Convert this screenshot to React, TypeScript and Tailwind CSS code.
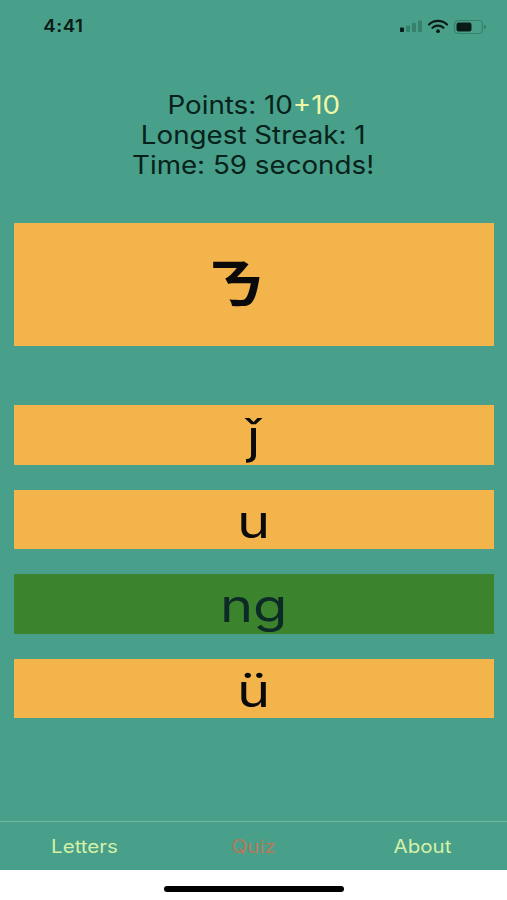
const sans = "font-['Inter','Liberation_Sans',sans-serif]";

function StatusIcons() {
  return (
    <svg width="88" height="16" viewBox="0 0 88 16" fill="none">
      {/* signal */}
      <rect x="0" y="8.5" width="4" height="4.5" rx="0.8" fill="#0a1a14" />
      <rect x="6" y="6.5" width="4" height="6.5" rx="0.8" fill="#37806d" />
      <rect x="12" y="4" width="4" height="9" rx="0.8" fill="#37806d" />
      <rect x="18" y="1.5" width="4" height="11.5" rx="0.8" fill="#37806d" />
      {/* wifi */}
      <path d="M29 5.5a13 13 0 0 1 18 0" stroke="#0a1a14" strokeWidth="2.2" strokeLinecap="round" />
      <path d="M32.5 8.8a8.2 8.2 0 0 1 11 0" stroke="#0a1a14" strokeWidth="2.2" strokeLinecap="round" />
      <circle cx="38" cy="12.2" r="1.9" fill="#0a1a14" />
      {/* battery */}
      <rect x="54.5" y="1.5" width="28" height="13" rx="4" stroke="#37806d" strokeWidth="1.2" />
      <rect x="56.5" y="3.5" width="15" height="9" rx="2.2" fill="#0a1a14" />
      <rect x="84" y="6" width="2" height="4" rx="1" fill="#37806d" />
    </svg>
  );
}

function Choice({ label, correct }: { label: string; correct?: boolean }) {
  return (
    <div
      className={`flex h-[59.5px] items-center justify-center pt-[3px] text-[46px] leading-none ${
        correct ? "bg-[#3c832e] text-[#0c2a26]" : "bg-[#f4b44c] text-[#0a0a0a]"
      }`}
    >
      <span className="inline-block scale-x-[1.22]">{label}</span>
    </div>
  );
}

export default function App() {
  return (
    <div className={`flex h-[900px] w-[507px] flex-col overflow-hidden bg-white ${sans}`}>
      <div className="flex flex-1 flex-col bg-[#48a08a]">
        <div className="flex h-[44px] shrink-0 items-center justify-between pl-[45px] pr-[19px] pt-[9px]">
          <span className="inline-block scale-x-[1.1] text-[17px] font-semibold tracking-[0.5px] text-[#0a1a14]">4:41</span>
          <StatusIcons />
        </div>

        <div className="mt-[46px] flex flex-col items-center text-[25px] leading-[30px] text-[#07211b]">
          <div className="scale-x-[1.11]">
            Points: 10<span className="text-[#f0f7a8]">+10</span>
          </div>
          <div className="scale-x-[1.11]">Longest Streak: 1</div>
          <div className="scale-x-[1.11]">Time: 59 seconds!</div>
        </div>

        <div className="ml-[14px] mr-[13px] mt-[43px] flex h-[123px] items-center justify-center bg-[#f4b44c] pb-[8px] pr-[38px] font-['Noto_Sans_CJK_TC',sans-serif] text-[54px] font-bold leading-none text-[#0a0a0a]">
          <span className="inline-block scale-x-[1.14]">ㄋ</span>
        </div>

        <div className="ml-[14px] mr-[13px] mt-[59px] flex flex-col gap-[25px]">
          <Choice label="ǰ" />
          <Choice label="u" />
          <Choice label="ng" correct />
          <Choice label="ü" />
        </div>

        <div className="mt-auto flex h-[49px] items-center border-t border-[#6fb5a4] text-[18px] text-[#d5f0a8]">
          <span className="w-[169px] scale-x-[1.14] text-center">Letters</span>
          <span className="w-[169px] scale-x-[1.14] text-center text-[#b5795a]">Quiz</span>
          <span className="w-[169px] scale-x-[1.14] text-center">About</span>
        </div>
      </div>

      <div className="flex h-[30px] shrink-0 items-start justify-center bg-white pt-[16px]">
        <div className="h-[6px] w-[180px] rounded-full bg-black" />
      </div>
    </div>
  );
}
